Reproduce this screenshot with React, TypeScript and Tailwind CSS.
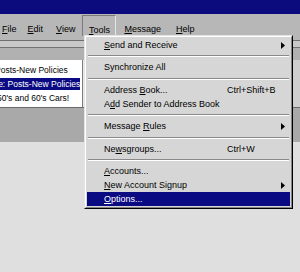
import React from "react";

const font = { fontFamily: '"Liberation Sans", Arial, sans-serif' };

function U({ children }: { children: React.ReactNode }) {
  return <span className="underline underline-offset-[1px]">{children}</span>;
}

function Arrow({ white }: { white?: boolean }) {
  return (
    <svg width="4" height="7" viewBox="0 0 4 7" className="ml-auto mr-[5px]">
      <path d="M0 0 L4 3.5 L0 7 Z" fill={white ? "#fff" : "#000"} />
    </svg>
  );
}

function Item({
  label,
  shortcut,
  sub,
  active,
}: {
  label: React.ReactNode;
  shortcut?: string;
  sub?: boolean;
  active?: boolean;
}) {
  return (
    <div
      className={`flex items-center h-[14px] pl-[17px] text-[9px] leading-none ${
        active ? "bg-[#0a0a82] text-white" : "text-black"
      }`}
    >
      <span className="w-[123px] shrink-0 whitespace-nowrap">{label}</span>
      {shortcut && <span className="whitespace-nowrap">{shortcut}</span>}
      {sub && <Arrow white={active} />}
    </div>
  );
}

function Sep({ h }: { h: string }) {
  return (
    <div className={`flex items-center ${h} px-[1px]`}>
      <div className="w-full border-t border-b border-t-[#8a8a8a] border-b-white" />
    </div>
  );
}

export default function App() {
  return (
    <div className="relative w-[300px] h-[272px] overflow-hidden bg-[#dfdfdf]" style={font}>
      {/* title bar */}
      <div className="h-[14px] bg-[#0b0b7d]" />

      {/* menu bar */}
      <div className="h-[26px] bg-[#b7b7b7] flex items-start text-[9px] text-black">
        <span className="ml-[2px] mt-[9px]"><U>F</U>ile</span>
        <span className="ml-[11px] mt-[9px]"><U>E</U>dit</span>
        <span className="ml-[13px] mt-[9px]"><U>V</U>iew</span>
        <div className="ml-[7px] mt-[1px] w-[34px] h-[21px] border-t border-l border-t-[#7a7a7a] border-l-[#7a7a7a] border-r border-r-[#e6e6e6] flex justify-center pt-[8px]">
          <span><U>T</U>ools</span>
        </div>
        <span className="ml-[8px] mt-[9px]"><U>M</U>essage</span>
        <span className="ml-[15px] mt-[9px]"><U>H</U>elp</span>
      </div>

      {/* toolbar strips */}
      <div className="h-[1px] bg-[#6e6e6e]" />
      <div className="h-[6px] bg-[#c8c8c8]" />
      <div className="h-[1px] bg-[#727272]" />
      <div className="h-[12px] bg-[#b1b1b1]" />

      {/* list + right panel */}
      <div className="flex h-[47px]">
        <div className="w-[82px] bg-white pt-[3px] overflow-hidden text-[8.5px] leading-none">
          <div className="h-[14px] flex items-center whitespace-nowrap text-black">
            <span className="ml-[-5px]">Posts-New Policies</span>
          </div>
          <div className="h-[14px] flex items-center">
            <div className="w-[80px] h-[12px] bg-[#0a0a82] text-white flex items-center whitespace-nowrap overflow-hidden">
              <span className="ml-[-8px]">Re: Posts-New Policies</span>
            </div>
          </div>
          <div className="h-[14px] flex items-center whitespace-nowrap text-black">
            <span className="ml-[-3px]">50's and 60's Cars!</span>
          </div>
        </div>
        <div className="w-[1px] bg-[#7d7d7d]" />
        <div className="w-[1px] bg-[#e8e8e8]" />
        <div className="flex-1 bg-[#cecece]" />
      </div>
      <div className="h-[1px] bg-[#6a6a6a]" />
      <div className="h-[34px] bg-[#a9a9a9]" />

      {/* Tools dropdown */}
      <div className="absolute left-[84px] top-[35px] w-[209px] border-t border-l border-t-[#e4e4e4] border-l-[#e4e4e4] border-r border-b border-r-black border-b-black">
        <div className="border-t border-l border-white border-r border-b border-r-[#858585] border-b-[#858585] bg-[#d6d6d6] p-[1px]">
          <Item label={<><U>S</U>end and Receive</>} sub />
          <Sep h="h-[8px]" />
          <Item label="Synchronize All" />
          <Sep h="h-[9px]" />
          <Item label={<>Address <U>B</U>ook...</>} shortcut="Ctrl+Shift+B" />
          <Item label={<>A<U>d</U>d Sender to Address Book</>} />
          <Sep h="h-[8px]" />
          <Item label={<>Message <U>R</U>ules</>} sub />
          <Sep h="h-[9px]" />
          <Item label={<>Ne<U>w</U>sgroups...</>} shortcut="Ctrl+W" />
          <Sep h="h-[8px]" />
          <Item label={<><U>A</U>ccounts...</>} />
          <Item label={<><U>N</U>ew Account Signup</>} sub />
          <Item label={<><U>O</U>ptions...</>} active />
        </div>
      </div>
    </div>
  );
}
